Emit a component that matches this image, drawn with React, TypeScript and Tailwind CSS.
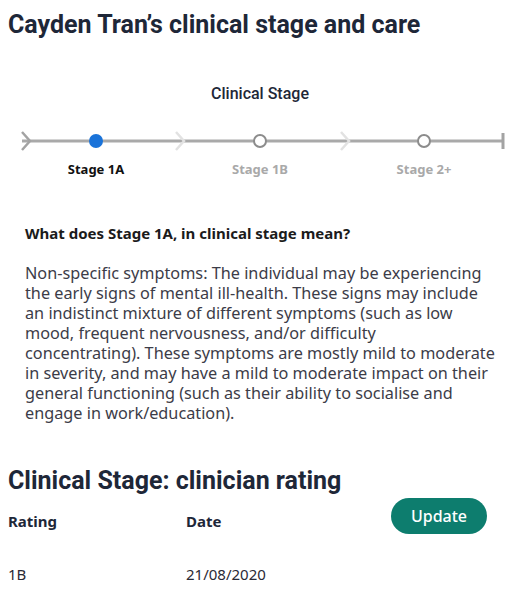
import React from 'react';

const heading = { fontFamily: 'Roboto, "Liberation Sans", sans-serif' };
const body = { fontFamily: '"Noto Sans", "Open Sans", "Liberation Sans", sans-serif' };

function StageTrack() {
  return (
    <svg width="510" height="24" viewBox="0 0 510 24" className="block">
      <line x1="22" y1="12" x2="503" y2="12" stroke="#a9a9a9" strokeWidth="3" />
      <polyline points="22,3 30,12 22,21" fill="none" stroke="#a3a3a3" strokeWidth="2.5" />
      <polyline points="176,3 184,12 176,21" fill="none" stroke="#e2e2e2" strokeWidth="2.5" />
      <polyline points="341,3 349,12 341,21" fill="none" stroke="#e2e2e2" strokeWidth="2.5" />
      <line x1="503" y1="4" x2="503" y2="20" stroke="#a3a3a3" strokeWidth="3" />
      <circle cx="96" cy="12" r="7" fill="#1a73d9" />
      <circle cx="260" cy="12" r="6" fill="#fff" stroke="#8c8c8c" strokeWidth="2" />
      <circle cx="424" cy="12" r="6" fill="#fff" stroke="#8c8c8c" strokeWidth="2" />
    </svg>
  );
}

export default function App() {
  const stages = [
    { label: 'Stage 1A', active: true },
    { label: 'Stage 1B', active: false },
    { label: 'Stage 2+', active: false },
  ];

  return (
    <div className="w-[510px] h-[597px] bg-white overflow-hidden">
      <h1 style={heading} className="pl-2 pt-[9px] text-[25px] leading-8 font-bold text-[#1e2738]">
        Cayden Tran’s clinical stage and care
      </h1>

      <h2 style={heading} className="mt-[43px] text-center text-[16px] leading-5 font-medium text-[#1e2738] pl-[10px]">
        Clinical Stage
      </h2>

      <div className="mt-[25px]">
        <StageTrack />
      </div>

      <div style={body} className="mt-[6px] ml-[14px] flex">
        {stages.map(s => (
          <div
            key={s.label}
            className={`w-[164px] text-center text-[13px] leading-5 font-bold ${s.active ? 'text-[#111111]' : 'text-[#a9a9a9]'}`}
          >
            {s.label}
          </div>
        ))}
      </div>

      <div style={body} className="pl-[25px] pr-[8px] pt-[44px]">
        <h3 className="text-[15px] leading-5 font-bold text-[#1b1b1b]">
          What does Stage 1A, in clinical stage mean?
        </h3>
        <p className="mt-[20px] text-[16.25px] leading-5 text-[#3c3c48]">
          Non-specific symptoms: The individual may be experiencing<br />
          the early signs of mental ill-health. These signs may include<br />
          an indistinct mixture of different symptoms (such as low<br />
          mood, frequent nervousness, and/or difficulty<br />
          concentrating). These symptoms are mostly mild to moderate<br />
          in severity, and may have a mild to moderate impact on their<br />
          general functioning (such as their ability to socialise and<br />
          engage in work/education).
        </p>
      </div>

      <h2 style={heading} className="pl-2 mt-[42px] text-[25px] leading-8 font-bold text-[#1e2738]">
        Clinical Stage: clinician rating
      </h2>

      <div style={body} className="flex px-2">
        <div className="w-[178px]">
          <div className="pt-[14px] text-[15px] leading-5 font-bold text-[#1e2738]">Rating</div>
          <div className="pt-[33px] text-[15px] leading-5 text-[#2a2a36]">1B</div>
        </div>
        <div className="w-[205px]">
          <div className="pt-[14px] text-[15px] leading-5 font-bold text-[#1e2738]">Date</div>
          <div className="pt-[33px] text-[15px] leading-5 text-[#2a2a36]">21/08/2020</div>
        </div>
        <div className="self-start">
          <button className="mt-[1px] w-[96px] h-[36px] rounded-full bg-[#0d7d6e] text-white text-[16px] font-medium">
            Update
          </button>
        </div>
      </div>
    </div>
  );
}
